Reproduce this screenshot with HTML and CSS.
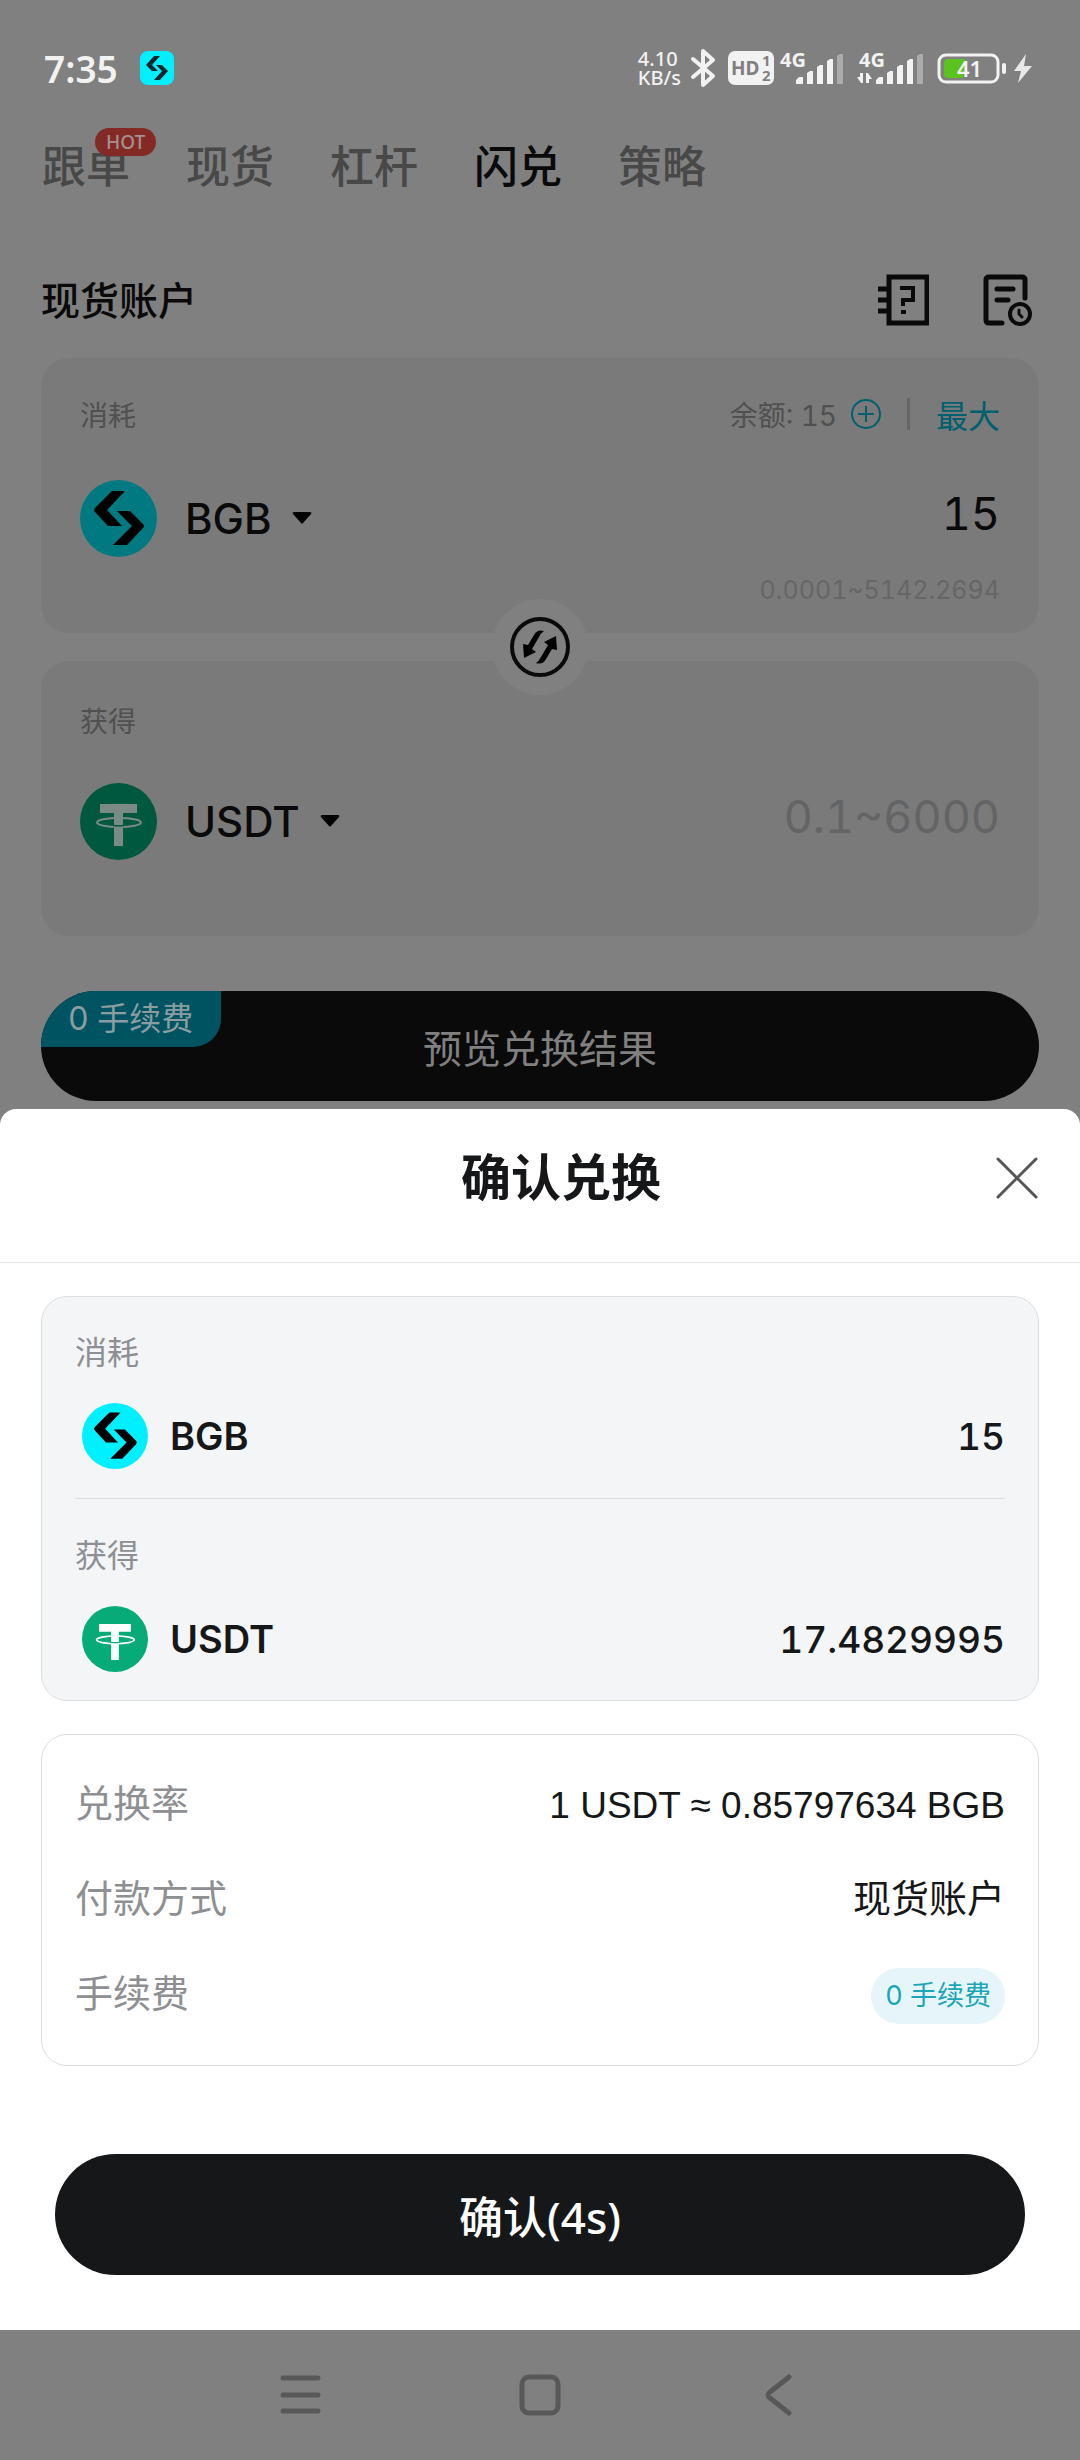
FILE: index.html
```html
<!DOCTYPE html>
<html lang="zh-CN">
<head>
    <meta charset="UTF-8">
    <meta name="viewport" content="width=device-width, initial-scale=1.0">
    <title>闪兑 - 确认兑换</title>
    <link rel="stylesheet" href="styles.css">
</head>
<body>
    <!-- Shared coin logos -->
    <svg class="sprite" aria-hidden="true">
        <symbol id="bgb" viewBox="0 0 77 77">
            <circle cx="38.5" cy="38.5" r="38.5" fill="currentColor"/>
            <path d="M32 11H45L27 30L42 46H28L15 32Q13 30 15 28Z"/>
            <path d="M37 31H50L63 44Q65 46 63 48L47 65H33L52 46Z"/>
        </symbol>
        <symbol id="usdt" viewBox="0 0 77 77">
            <circle cx="38.5" cy="38.5" r="38.5" fill="currentColor"/>
            <ellipse cx="39" cy="39.5" rx="22" ry="4.5" fill="none" stroke="var(--mark)" stroke-width="2"/>
            <path d="M20 21H57V30H43V63H34V30H20Z" fill="var(--mark)"/>
            <path d="M33 42.5Q39 43 44 42.5" fill="none" stroke="currentColor" stroke-width="1.5"/>
        </symbol>
    </svg>

    <div class="app">
        <div class="status-bar">
            <span class="time">7:35</span>
            <svg class="app-badge" width="34" height="34" viewBox="0 0 34 34">
                <rect width="34" height="34" rx="8" fill="#00f0ff"/>
                <path d="M14 5H20L12 14L18 20H12L6 14Z M16 14H22L28 20L20 29H14L22 20Z" fill="#06282b"/>
            </svg>
            <div class="status-icons">
                <span class="net-speed">4.10<br>KB/s</span>
                <svg width="31" height="40" viewBox="0 0 31 40" fill="none" stroke="#f2f2f2" stroke-width="4" stroke-linejoin="round" stroke-linecap="round">
                    <path d="M2 11L22 28L12 37V3L22 12L2 29"/>
                </svg>
                <svg width="46" height="34" viewBox="0 0 46 34">
                    <rect width="46" height="34" rx="7" fill="#f2f2f2"/>
                    <text class="hd" x="3" y="24">HD</text>
                    <text class="sim" x="34" y="15">1</text>
                    <text class="sim" x="34" y="30">2</text>
                </svg>
                <svg width="71" height="34" viewBox="0 0 71 34" fill="#f2f2f2">
                    <text class="gen" x="0" y="16">4G</text>
                    <path d="M16 33V29L19 26H23V33Z M27 33V22L30 20H33V33Z M37 33V16L40 14H43V33Z M47 33V10L50 8H53V33Z"/>
                    <path d="M57 33V5L60 3H63V33Z" fill="#acacac"/>
                </svg>
                <svg width="74" height="34" viewBox="0 0 74 34" fill="#f2f2f2">
                    <text class="gen" x="2" y="16">4G</text>
                    <path d="M0 26H3V22H6V32H4Z M9 32V22H11L15 28H12V32Z"/>
                    <path d="M19 33V29L22 26H26V33Z M30 33V22L33 20H36V33Z M40 33V16L43 14H46V33Z M50 33V10L53 8H56V33Z"/>
                    <path d="M60 33V5L63 3H66V33Z" fill="#acacac"/>
                </svg>
                <svg width="70" height="34" viewBox="0 0 70 34">
                    <rect x="2" y="4" width="59" height="27" rx="7" fill="none" stroke="#f2f2f2" stroke-width="3"/>
                    <path d="M28 8H11Q7 8 7 12V23Q7 27 11 27H26Z" fill="#5ac31e"/>
                    <rect x="65" y="12" width="4" height="11" rx="2" fill="#f2f2f2"/>
                    <text class="charge" x="20" y="26">41</text>
                </svg>
                <svg width="20" height="34" viewBox="0 0 20 34">
                    <path d="M13 3L1 20H8L5 32L19 15H11Z" fill="#e8e8e8"/>
                </svg>
            </div>
        </div>

        <nav class="tabs">
            <a href="#">跟单<span class="hot">HOT</span></a>
            <a href="#">现货</a>
            <a href="#">杠杆</a>
            <a href="#" class="active">闪兑</a>
            <a href="#">策略</a>
        </nav>

        <main class="swap">
            <div class="account">
                <h1>现货账户</h1>
                <button type="button" aria-label="帮助">
                    <svg width="52" height="54" viewBox="0 0 52 54" fill="none" stroke="currentColor" stroke-width="5">
                        <rect x="12" y="4" width="38" height="46"/>
                        <path d="M1 16H11M1 27H11M1 38H11"/>
                        <path d="M23 15H36V27H26V33M24 39H29" stroke-width="4"/>
                    </svg>
                </button>
                <button type="button" aria-label="记录">
                    <svg width="50" height="54" viewBox="0 0 50 54" fill="none" stroke="currentColor" stroke-width="5" stroke-linecap="round">
                        <path d="M42 25V7Q42 4 39 4H6Q3 4 3 7V47Q3 50 6 50H19"/>
                        <path d="M14 16H30M14 27H25"/>
                        <circle cx="37" cy="41" r="10" stroke-width="4"/>
                        <path d="M36 37V41L39 44" stroke-width="3"/>
                    </svg>
                </button>
            </div>

            <section class="panel">
                <div class="panel-head">
                    <label for="pay">消耗</label>
                    <span class="balance">余额: 15</span>
                    <button type="button" class="add" aria-label="充值">
                        <svg width="30" height="30" viewBox="0 0 30 30" fill="none" stroke="currentColor" stroke-width="2">
                            <circle cx="15" cy="15" r="14"/>
                            <path d="M15 7V23M7 15H23"/>
                        </svg>
                    </button>
                    <span class="bar"></span>
                    <button type="button" class="max">最大</button>
                </div>
                <div class="panel-row">
                    <div class="coin">
                        <svg class="coin-logo bgb"><use href="#bgb"/></svg>
                        <select aria-label="消耗币种"><option>BGB</option></select>
                        <svg width="20" height="12" viewBox="0 0 20 12"><path d="M2 0H18Q20 0 19 2L11 11Q10 12 9 11L1 2Q0 0 2 0Z"/></svg>
                    </div>
                    <input type="text" id="pay" class="amount" value="15">
                </div>
                <p class="limit">0.0001~5142.2694</p>
            </section>

            <button type="button" class="switch" aria-label="切换">
                <svg width="60" height="60" viewBox="0 0 60 60">
                    <circle cx="30" cy="30" r="28" fill="none" stroke="#0a0a0a" stroke-width="4"/>
                    <path id="arrow" d="M34 14Q27 12 24 18L18 28L13 27L14 41L26 35L22 32L29 20Q31 16 34 14Z"/>
                    <use href="#arrow" transform="rotate(180 30 30)"/>
                </svg>
            </button>

            <section class="panel receive">
                <div class="panel-head">
                    <label for="get">获得</label>
                </div>
                <div class="panel-row">
                    <div class="coin">
                        <svg class="coin-logo usdt"><use href="#usdt"/></svg>
                        <select aria-label="获得币种"><option>USDT</option></select>
                        <svg width="20" height="12" viewBox="0 0 20 12"><path d="M2 0H18Q20 0 19 2L11 11Q10 12 9 11L1 2Q0 0 2 0Z"/></svg>
                    </div>
                    <input type="text" id="get" class="amount" placeholder="0.1~6000">
                </div>
            </section>

            <button type="button" class="preview">
                <span class="free">0 手续费</span>
                预览兑换结果
            </button>
        </main>
    </div>

    <section class="sheet" role="dialog" aria-labelledby="sheetTitle">
        <header class="sheet-head">
            <h2 id="sheetTitle">确认兑换</h2>
            <button type="button" aria-label="关闭">
                <svg width="42" height="42" viewBox="0 0 42 42" fill="none" stroke="#555" stroke-width="3" stroke-linecap="round">
                    <path d="M2 2L40 40M40 2L2 40"/>
                </svg>
            </button>
        </header>

        <div class="sheet-body">
            <div class="card trade">
                <div class="entry">
                    <p>消耗</p>
                    <div class="entry-row">
                        <svg class="coin-logo bgb"><use href="#bgb"/></svg>
                        <strong>BGB</strong>
                        <span class="value">15</span>
                    </div>
                </div>
                <div class="entry">
                    <p>获得</p>
                    <div class="entry-row">
                        <svg class="coin-logo usdt"><use href="#usdt"/></svg>
                        <strong>USDT</strong>
                        <span class="value">17.4829995</span>
                    </div>
                </div>
            </div>

            <dl class="card details">
                <div><dt>兑换率</dt><dd class="rate">1 USDT ≈ 0.85797634 BGB</dd></div>
                <div><dt>付款方式</dt><dd>现货账户</dd></div>
                <div><dt>手续费</dt><dd class="pill">0 手续费</dd></div>
            </dl>

            <button type="button" class="confirm">确认(4s)</button>
        </div>
    </section>

    <div class="nav-bar">
        <button type="button" aria-label="菜单">
            <svg width="42" height="42" viewBox="0 0 42 42"><path d="M3 4H38M3 21H38M3 37H38"/></svg>
        </button>
        <button type="button" aria-label="主页">
            <svg width="42" height="42" viewBox="0 0 42 42"><rect x="3" y="3" width="36" height="36" rx="7"/></svg>
        </button>
        <button type="button" aria-label="返回">
            <svg width="42" height="42" viewBox="0 0 42 42"><path d="M31 3L12 18Q8 21 12 24L31 39"/></svg>
        </button>
    </div>
</body>
</html>
```

FILE: styles.css
```css
* {
    box-sizing: border-box;
}

body {
    margin: 0;
    min-height: 100vh;
    display: flex;
    flex-direction: column;
    background: #808080;
    color: #0a0a0a;
    font-family: Inter, "Noto Sans CJK SC", sans-serif;
    font-variant-numeric: tabular-nums;
}

h1, h2, p, dl, dd {
    margin: 0;
}

button, input, select {
    font: inherit;
    font-variant-numeric: inherit;
    color: inherit;
    background: none;
    border: none;
    padding: 0;
}

button svg {
    display: block;
}

.sprite {
    display: none;
}

/* Status bar */
.status-bar {
    display: flex;
    align-items: center;
    height: 136px;
    padding: 0 47px 0 44px;
    color: #f2f2f2;
    font-family: "Noto Sans", sans-serif;
}

.time {
    font-size: 37px;
    font-weight: 600;
}

.app-badge {
    margin-left: 22px;
}

.status-icons {
    display: flex;
    align-items: center;
    gap: 6px;
    margin-left: auto;
}

.status-icons svg {
    overflow: visible;
}

.net-speed {
    margin-right: 4px;
    font-size: 20px;
    font-weight: 500;
    line-height: 19px;
}

.hd {
    font-size: 19px;
    font-weight: 700;
    fill: #808080;
}

.sim {
    font-size: 15px;
    font-weight: 700;
    fill: #808080;
}

.gen {
    font-size: 20px;
    font-weight: 700;
}

.charge {
    font-size: 22px;
    font-weight: 600;
    fill: #f2f2f2;
}

/* Tabs */
.tabs {
    display: flex;
    gap: 56px;
    padding: 0 42px;
    line-height: 62px;
}

.tabs a {
    position: relative;
    color: #484848;
    font-size: 44px;
    font-weight: 500;
    text-decoration: none;
}

.tabs .active {
    color: #0a0a0a;
}

.hot {
    position: absolute;
    top: -8px;
    left: 53px;
    padding: 0 11px;
    border-radius: 14px;
    background: #842a25;
    color: #a39290;
    font-family: "Noto Sans", sans-serif;
    font-size: 19px;
    font-weight: 500;
    line-height: 28px;
}

/* Swap form */
.swap {
    padding: 74px 41px 8px;
}

.account {
    display: flex;
    align-items: center;
    height: 56px;
    margin-bottom: 30px;
}

.account h1 {
    flex: 1;
    padding-bottom: 4px;
    font-size: 39px;
    font-weight: 500;
}

.account button + button {
    margin-left: 54px;
    margin-right: 6px;
}

.panel {
    min-height: 275px;
    padding: 36px 39px 0;
    border-radius: 28px;
    background: #7a7a7a;
}

.panel-head {
    display: flex;
    align-items: center;
    height: 40px;
    margin-bottom: 46px;
    color: #505050;
    font-size: 28px;
}

.receive .panel-head {
    height: 46px;
    margin-bottom: 40px;
}

.balance {
    margin-left: auto;
}

.add {
    margin: 0 26px 0 14px;
    color: #00606d;
}

.bar {
    width: 3px;
    height: 32px;
    margin-right: 26px;
    background: #666;
}

.max {
    color: #00606d;
    font-size: 32px;
}

.panel-row {
    display: flex;
    align-items: flex-start;
}

.coin {
    display: flex;
    align-items: center;
    height: 76px;
}

.coin-logo {
    width: 77px;
    height: 77px;
}

.app .bgb {
    color: #007a80;
}

.app .usdt {
    color: #00583f;
    --mark: #7a8a84;
}

.coin select {
    appearance: none;
    field-sizing: content;
    margin: 0 20px 0 28px;
    font-size: 42px;
    font-weight: 500;
}

.amount {
    flex: 1;
    min-width: 0;
    height: 66px;
    font-size: 45px;
    text-align: right;
}

.amount::placeholder {
    color: #636465;
}

.limit {
    padding-top: 18px;
    color: #656667;
    font-size: 25px;
    line-height: 32px;
    text-align: right;
}

/* Overlaps both panels */
.switch {
    position: relative;
    display: flex;
    align-items: center;
    justify-content: center;
    width: 96px;
    height: 96px;
    margin: -34px auto;
    border-radius: 50%;
    background: #808080;
}

.preview {
    position: relative;
    display: block;
    width: 100%;
    height: 110px;
    margin-top: 55px;
    border-radius: 55px;
    background: #0a0a0a;
    color: #808080;
    font-size: 39px;
    overflow: hidden;
}

.free {
    position: absolute;
    top: 0;
    left: 0;
    padding: 0 28px 0 27px;
    border-bottom-right-radius: 28px;
    background: #005462;
    color: #8a9da0;
    font-size: 32px;
    line-height: 56px;
}

/* Confirm sheet */
.sheet {
    flex: 1;
    border-radius: 16px 16px 0 0;
    background: #fff;
    color: #161719;
}

.sheet-head {
    display: flex;
    align-items: center;
    height: 154px;
    padding: 0 42px 16px 126px;
    border-bottom: 1px solid #e8e8e8;
}

.sheet-head h2 {
    flex: 1;
    padding-bottom: 8px;
    font-size: 50px;
    font-weight: 700;
    text-align: center;
}

.sheet-body {
    padding: 33px 41px 55px;
}

.card {
    padding: 32px 33px 28px;
    border: 1px solid #dcdee0;
    border-radius: 26px;
}

.trade {
    background: #f3f5f7;
}

.entry + .entry {
    margin-top: 29px;
    padding-top: 33px;
    border-top: 1px solid #dcdee0;
}

.entry p {
    margin-bottom: 26px;
    color: #8d8f92;
    font-size: 32px;
    line-height: 48px;
}

.entry-row {
    display: flex;
    align-items: center;
    height: 66px;
    padding-left: 7px;
    font-size: 38px;
}

.sheet .coin-logo {
    width: 66px;
    height: 66px;
    margin-right: 22px;
}

.sheet .bgb {
    color: #00f0ff;
}

.sheet .usdt {
    color: #06ab78;
    --mark: #fff;
}

.entry strong {
    font-weight: 600;
}

.value {
    margin-left: auto;
    font-size: 37px;
    font-weight: 500;
}

.details {
    display: flex;
    flex-direction: column;
    gap: 39px;
    margin-top: 33px;
    padding: 43px 33px 41px;
    font-size: 38px;
    line-height: 50px;
}

.details div {
    display: flex;
    justify-content: space-between;
    height: 56px;
}

.details dt {
    color: #8d8f92;
}

.details .rate {
    font-family: "Liberation Sans", sans-serif;
    font-size: 37px;
    line-height: 56px;
}

.details .pill {
    padding: 0 14px;
    border-radius: 28px;
    background: #e5f5f9;
    color: #1aa5b8;
    font-size: 27px;
    line-height: 56px;
}

.confirm {
    display: block;
    width: calc(100% - 28px);
    height: 121px;
    margin: 88px auto 0;
    border-radius: 61px;
    background: #161719;
    color: #fff;
    font-family: "Noto Sans", "Noto Sans CJK SC", sans-serif;
    font-size: 44px;
    font-weight: 500;
}

/* System navigation */
.nav-bar {
    display: flex;
    align-items: center;
    justify-content: center;
    gap: 197px;
    height: 130px;
}

.nav-bar svg {
    fill: none;
    stroke: #585858;
    stroke-width: 5;
    stroke-linecap: round;
}
```
